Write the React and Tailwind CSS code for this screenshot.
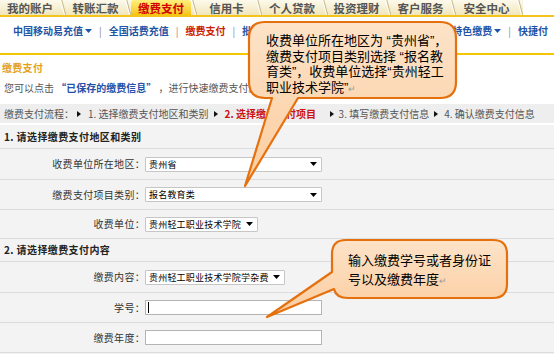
import React from "react";

const tabs = [
  { label: "我的账户", w: "w-[60px]" },
  { label: "转账汇款", w: "w-[59px]" },
  { label: "缴费支付", w: "w-[60px]", active: true },
  { label: "信用卡", w: "w-[59px]" },
  { label: "个人贷款", w: "w-[60px]" },
  { label: "投资理财", w: "w-[57px]" },
  { label: "客户服务", w: "w-[59px]" },
  { label: "安全中心", w: "w-[61px]" },
];

function TabSep() {
  return (
    <svg width="6" height="15" className="shrink-0">
      <path d="M0.5 0 L4.5 15" stroke="#ffffff" strokeWidth="1" />
      <path d="M1.8 0 L5.8 15" stroke="#c8b98a" strokeWidth="1" />
    </svg>
  );
}

function Caret({ color = "#000" }) {
  return (
    <svg width="7" height="4" className="shrink-0">
      <path d="M0 0 H7 L3.5 4 Z" fill={color} />
    </svg>
  );
}

function Arrow() {
  return (
    <svg width="4" height="6" className="shrink-0">
      <path d="M0 0 L4 3 L0 6 Z" fill="#111" />
    </svg>
  );
}

function Select({ w, text }) {
  return (
    <div
      className={`${w} h-[15px] bg-white border border-[#c6c6c6] rounded-[1px] flex items-center pl-[3px] pr-[4px] text-[9px] leading-[11px] tracking-[0.2px] text-black`}
    >
      <span className="flex-1 whitespace-nowrap overflow-hidden">{text}</span>
      <Caret />
    </div>
  );
}

function Field({ cursor }) {
  return (
    <div className="w-[177px] h-[15px] bg-white border border-[#b4b4b4] flex items-center pl-[2px]">
      {cursor && <span className="w-px h-[11px] bg-black" />}
    </div>
  );
}

function Row({ h, label, children }) {
  return (
    <div className={`${h} flex items-center border-b border-[#dcdcdc]`}>
      <div className="w-[145px] text-right text-[10px] leading-[12px] tracking-[0.3px] text-[#333] whitespace-nowrap">
        {label}
      </div>
      {children}
    </div>
  );
}

function NavSep() {
  return <span className="text-[#8a8a8a] font-normal">|</span>;
}

export default function App() {
  return (
    <div className="relative w-[554px] h-[354px] overflow-hidden bg-white font-['Noto_Sans_CJK_SC','Noto_Sans',sans-serif]">
      {/* top tabs */}
      <div className="flex h-[15px]">
        <div className="flex h-[15px] bg-gradient-to-b from-[#fdfaec] to-[#f1e6bb]">
          {tabs.map((t) => (
            <div key={t.label} className="flex">
              {t.active ? (
                <div
                  className={`${t.w} h-[15px] flex items-center justify-center rounded-t-[3px] bg-gradient-to-b from-[#fff07a] to-[#f6c400] text-[#d00000] font-bold text-[11.5px] leading-[12px]`}
                >
                  {t.label}
                </div>
              ) : (
                <div
                  className={`${t.w} h-[15px] flex items-center justify-center text-[#555] font-bold text-[11.5px] leading-[12px]`}
                >
                  {t.label}
                </div>
              )}
              <TabSep />
            </div>
          ))}
        </div>
        <div className="flex-1" />
      </div>
      <div className="h-[2px] bg-[#f3c51c]" />

      {/* sub nav */}
      <div className="h-[36px] pt-[8px] pl-[13px] flex items-start gap-[7px] text-[10px] leading-[12px] font-bold text-[#1f55a6] whitespace-nowrap">
        <span className="flex items-center gap-[2px]">
          中国移动易充值
          <Caret color="#1f55a6" />
        </span>
        <NavSep />
        <span>全国话费充值</span>
        <NavSep />
        <span className="text-[#cc2200]">缴费支付</span>
        <NavSep />
        <span>批量缴费</span>
        <NavSep />
        <span>公共事业缴费</span>
        <NavSep />
        <span>各地缴费</span>
        <NavSep />
        <span className="flex items-center gap-[2px]">
          本行特色缴费
          <Caret color="#1f55a6" />
        </span>
        <NavSep />
        <span>快捷付</span>
        <NavSep />
      </div>
      <div className="h-[2px] bg-[#f6c600]" />

      {/* title */}
      <div className="h-[22px] pt-[7px] pl-[2px] text-[10px] leading-[12px] tracking-[0.3px] font-bold text-[#e3a21a]">
        缴费支付
      </div>
      <div className="h-[27px] pt-[5px] pl-[4px] text-[10px] leading-[12px] text-[#555] whitespace-nowrap">
        您可以点击
        <span className="font-bold text-[#2452a8]"> “已保存的缴费信息” </span>
        ，进行快速缴费支付。
      </div>

      {/* step bar */}
      <div className="h-[19px] bg-[#eeeeee] flex items-center pl-[4px] text-[10px] leading-[12px] text-[#555] whitespace-nowrap">
        <span>缴费支付流程：</span>
        <span className="ml-[3px]">
          <Arrow />
        </span>
        <span className="ml-[7px]">1. 选择缴费支付地区和类别</span>
        <span className="ml-[5px]">
          <Arrow />
        </span>
        <span className="ml-[7px] w-[100px] font-bold text-[#cc1111]">2. 选择缴费支付项目</span>
        <span className="ml-[5px]">
          <Arrow />
        </span>
        <span className="ml-[5px]">3. 填写缴费支付信息</span>
        <span className="ml-[5px]">
          <Arrow />
        </span>
        <span className="ml-[6px]">4. 确认缴费支付信息</span>
      </div>
      <div className="h-[2px]" />

      {/* form */}
      <div className="bg-[#f3f3f3] h-[229px]">
        <div className="h-[24px] flex items-center pl-[4px] border-b border-[#dcdcdc] text-[10px] leading-[12px] tracking-[0.4px] font-bold text-[#222]">
          1. 请选择缴费支付地区和类别
        </div>
        <Row h="h-[31px]" label="收费单位所在地区：">
          <Select w="w-[177px]" text="贵州省" />
        </Row>
        <Row h="h-[30px]" label="缴费支付项目类别：">
          <Select w="w-[177px]" text="报名教育类" />
        </Row>
        <Row h="h-[29px]" label="收费单位：">
          <Select w="w-[113px]" text="贵州轻工职业技术学院" />
        </Row>
        <div className="h-[23px] flex items-center pl-[4px] border-b border-[#dcdcdc] text-[10px] leading-[12px] tracking-[0.4px] font-bold text-[#222]">
          2. 请选择缴费支付内容
        </div>
        <Row h="h-[31px]" label="缴费内容：">
          <Select w="w-[140px]" text="贵州轻工职业技术学院学杂费" />
        </Row>
        <Row h="h-[30px]" label="学号：">
          <Field cursor />
        </Row>
        <Row h="h-[30px]" label="缴费年度：">
          <Field />
        </Row>
      </div>

      {/* callouts */}
      <svg className="absolute left-0 top-0 pointer-events-none" width="554" height="354">
        <defs>
          <linearGradient id="peach" x1="0" y1="0" x2="0" y2="1">
            <stop offset="0" stopColor="#fde3c8" />
            <stop offset="1" stopColor="#fbcc9e" />
          </linearGradient>
        </defs>
        <path
          d="M265 22 H440 Q456 22 456 38 V82 Q456 98 440 98 H298 L245 186 L272 98 H265 Q249 98 249 82 V38 Q249 22 265 22 Z"
          fill="url(#peach)"
          stroke="#e5700e"
          strokeWidth="2.2"
          strokeLinejoin="round"
        />
        <path
          d="M346 240 H493 Q507 240 507 254 V284 Q507 298 493 298 H348 Q336 298 334 289 L267 317 L332 272 V254 Q332 240 346 240 Z"
          fill="url(#peach)"
          stroke="#e5700e"
          strokeWidth="2.2"
          strokeLinejoin="round"
        />
      </svg>
      <div className="absolute left-[266px] top-[33px] text-[13px] leading-[15.5px] text-black whitespace-nowrap font-['Liberation_Sans','Noto_Sans_CJK_SC',sans-serif]">
        <div>收费单位所在地区为 “贵州省”，</div>
        <div>缴费支付项目类别选择 “报名教</div>
        <div>育类”，收费单位选择“贵州轻工</div>
        <div>
          职业技术学院”<span className="text-[9px] text-[#999]">↵</span>
        </div>
      </div>
      <div className="absolute left-[348px] top-[251px] text-[13px] leading-[19px] text-black whitespace-nowrap font-['Liberation_Sans','Noto_Sans_CJK_SC',sans-serif]">
        <div>输入缴费学号或者身份证</div>
        <div>
          号以及缴费年度<span className="text-[9px] text-[#999]">↵</span>
        </div>
      </div>
    </div>
  );
}
